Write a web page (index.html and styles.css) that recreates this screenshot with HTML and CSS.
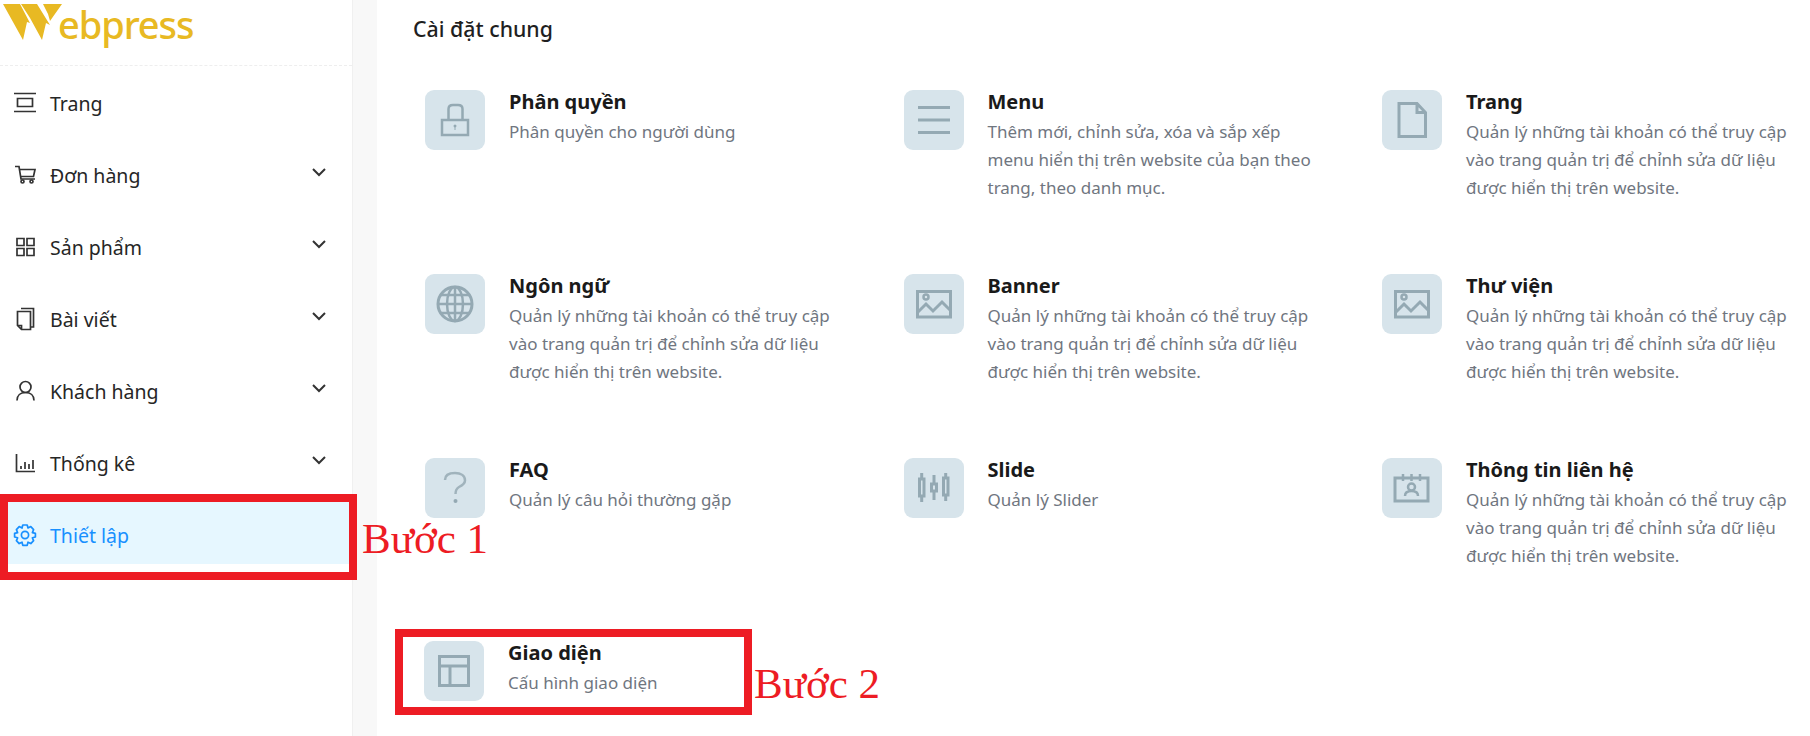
FILE: index.html
```html
<!DOCTYPE html>
<html lang="vi">

<head>
    <meta charset="utf-8">
    <title>Cài đặt chung</title>
    <link rel="stylesheet" href="styles.css">
</head>

<body>
    <aside class="sidebar">
        <div class="logo">
            <svg class="logo-mark" viewBox="0 0 64 44" width="64" height="44">
                <polygon points="3,4 20,4 30,23 27,22 23,40" />
                <polygon points="21,4 37,4 50,25 46,23 42,40 30,18" />
                <polygon points="43,4 62,4 50,21 48,14" />
            </svg>
            <span class="logo-text">ebpress</span>
        </div>

        <ul class="nav">
            <li class="nav-item">
                <svg class="nav-icon" viewBox="0 0 24 24"><path d="M1 2.5H23M1 20.5H23M4.5 7.5H19.5V15.5H4.5Z" /></svg>
                <span>Trang</span>
            </li>
            <li class="nav-item">
                <svg class="nav-icon" viewBox="0 0 24 24"><path d="M2 3.5H6L8 16H22M6.5 6.5H22L20.5 13.5H7.6" /><circle cx="9.5" cy="18.5" r="1.5" /><circle cx="18.5" cy="18.5" r="1.5" /></svg>
                <span>Đơn hàng</span>
                <svg class="chevron" viewBox="0 0 14 10"><path d="M1 2L7 8L13 2" /></svg>
            </li>
            <li class="nav-item">
                <svg class="nav-icon" viewBox="0 0 24 24"><path d="M4 3.5H11V10.5H4ZM14 3.5H21V10.5H14ZM4 13.5H11V20.5H4ZM14 13.5H21V20.5H14Z" /></svg>
                <span>Sản phẩm</span>
                <svg class="chevron" viewBox="0 0 14 10"><path d="M1 2L7 8L13 2" /></svg>
            </li>
            <li class="nav-item">
                <svg class="nav-icon" viewBox="0 0 24 24"><path d="M8 1.5H20.5V20H18M4.5 4.5H17.5V22.5H8.5L4.5 18.5ZM4.5 18.5H8.5V22.5" /></svg>
                <span>Bài viết</span>
                <svg class="chevron" viewBox="0 0 14 10"><path d="M1 2L7 8L13 2" /></svg>
            </li>
            <li class="nav-item">
                <svg class="nav-icon" viewBox="0 0 24 24"><circle cx="12.5" cy="8" r="5.5" /><path d="M4 21.5C4 16.5 7.5 13.5 12.5 13.5S21 16.5 21 21.5" /></svg>
                <span>Khách hàng</span>
                <svg class="chevron" viewBox="0 0 14 10"><path d="M1 2L7 8L13 2" /></svg>
            </li>
            <li class="nav-item">
                <svg class="nav-icon" viewBox="0 0 24 24"><path d="M3.5 3V20.5H22M8 18V15M12 18V11M16 18V13M20 18V9" /></svg>
                <span>Thống kê</span>
                <svg class="chevron" viewBox="0 0 14 10"><path d="M1 2L7 8L13 2" /></svg>
            </li>
            <li class="nav-item active">
                <svg class="nav-icon" viewBox="0 0 24 24"><circle cx="12" cy="12" r="3.6" /><path d="M9.8 2H14.2L15 5L17.8 3.6L20.6 6.6L19.4 9.6L22.4 10.4V14L19.4 14.8L20.6 17.6L17.8 20.6L15 19.2L14.2 22.4H9.8L9 19.2L6.2 20.6L3.4 17.6L4.6 14.8L1.6 14V10.4L4.6 9.6L3.4 6.6L6.2 3.6L9 5Z" stroke-linejoin="round" /></svg>
                <span>Thiết lập</span>
            </li>
        </ul>
    </aside>

    <div class="gutter"></div>

    <main class="content">
        <h1 class="page-title">Cài đặt chung</h1>

        <div class="settings">
            <div class="setting">
                <div class="setting-icon">
                    <svg viewBox="0 0 60 60"><path d="M17 30H43V45H17ZM23.5 30V19C23.5 16 25 15 28 15H33C36 15 37.5 16 37.5 19V30" /><path class="fill" d="M28.5 36a1.5 1.5 0 1 1 3 0a1.5 1.5 0 0 1-1 1.4V40H29.500V37.400a1.5 1.500 0 0 1-1-1.400Z" /></svg>
                </div>
                <div class="setting-body">
                    <h3>Phân quyền</h3>
                    <p>Phân quyền cho người dùng</p>
                </div>
            </div>
            <div class="setting">
                <div class="setting-icon">
                    <svg viewBox="0 0 60 60"><path class="thick" d="M14 17.500H46M14 30H46M14 42.500H46" /></svg>
                </div>
                <div class="setting-body">
                    <h3>Menu</h3>
                    <p>Thêm mới, chỉnh sửa, xóa và sắp xếp menu hiển thị trên website của bạn theo trang, theo danh mục.</p>
                </div>
            </div>
            <div class="setting">
                <div class="setting-icon">
                    <svg viewBox="0 0 60 60"><path class="thick" d="M17 13.500H35L43.500 22.500V46.500H17ZM35 13.500V22.500H43.500" /></svg>
                </div>
                <div class="setting-body">
                    <h3>Trang</h3>
                    <p>Quản lý những tài khoản có thể truy cập vào trang quản trị để chỉnh sửa dữ liệu được hiển thị trên website.</p>
                </div>
            </div>

            <div class="setting">
                <div class="setting-icon">
                    <svg viewBox="0 0 60 60"><circle class="thick" cx="30" cy="30" r="17" /><ellipse cx="30" cy="30" rx="8" ry="17" /><path d="M30 13V47M13.500 30H46.500M16 21H44M16 39H44" /></svg>
                </div>
                <div class="setting-body">
                    <h3>Ngôn ngữ</h3>
                    <p>Quản lý những tài khoản có thể truy cập vào trang quản trị để chỉnh sửa dữ liệu được hiển thị trên website.</p>
                </div>
            </div>
            <div class="setting">
                <div class="setting-icon">
                    <svg viewBox="0 0 60 60"><path class="thick" d="M13.500 17.500H46.500V43H13.500ZM14 38L22 30L29 37L38 28L47 37" /><circle cx="22" cy="23" r="2.500" /></svg>
                </div>
                <div class="setting-body">
                    <h3>Banner</h3>
                    <p>Quản lý những tài khoản có thể truy cập vào trang quản trị để chỉnh sửa dữ liệu được hiển thị trên website.</p>
                </div>
            </div>
            <div class="setting">
                <div class="setting-icon">
                    <svg viewBox="0 0 60 60"><path class="thick" d="M13.500 17.500H46.500V43H13.500ZM14 38L22 30L29 37L38 28L47 37" /><circle cx="22" cy="23" r="2.500" /></svg>
                </div>
                <div class="setting-body">
                    <h3>Thư viện</h3>
                    <p>Quản lý những tài khoản có thể truy cập vào trang quản trị để chỉnh sửa dữ liệu được hiển thị trên website.</p>
                </div>
            </div>

            <div class="setting">
                <div class="setting-icon">
                    <svg viewBox="0 0 60 60"><path class="light" d="M20 22C20 17 24 15 30 15C36 15 40 18 40 22.500C40 26 37 27.500 34 29C31.500 30.500 30.500 32 30.500 36" /><circle class="dot" cx="30.500" cy="43" r="2" /></svg>
                </div>
                <div class="setting-body">
                    <h3>FAQ</h3>
                    <p>Quản lý câu hỏi thường gặp</p>
                </div>
            </div>
            <div class="setting">
                <div class="setting-icon">
                    <svg viewBox="0 0 60 60"><path class="thick" d="M15.500 21H20V38H15.500ZM17.700 15V21M17.700 38V44M27.500 26H32.500V33H27.500ZM30 17V26M30 33V42M39.500 20H44V37H39.500ZM41.700 15V20M41.700 37V43" /></svg>
                </div>
                <div class="setting-body">
                    <h3>Slide</h3>
                    <p>Quản lý Slider</p>
                </div>
            </div>
            <div class="setting">
                <div class="setting-icon">
                    <svg viewBox="0 0 60 60"><path class="thick" d="M13 20H46V43H13Z" /><path d="M21 16V23M29.500 16V23M38 16V23M23 38C23 34 26 33 29.500 33S36 34 36 38" /><circle cx="29.500" cy="29" r="3.500" /></svg>
                </div>
                <div class="setting-body">
                    <h3>Thông tin liên hệ</h3>
                    <p>Quản lý những tài khoản có thể truy cập vào trang quản trị để chỉnh sửa dữ liệu được hiển thị trên website.</p>
                </div>
            </div>

            <div class="setting setting-last">
                <div class="setting-icon">
                    <svg viewBox="0 0 60 60"><path class="thick" d="M15.500 15.500H44.500V44.500H15.500ZM15.500 25H44.500M26 25V44.500" /></svg>
                </div>
                <div class="setting-body">
                    <h3>Giao diện</h3>
                    <p>Cấu hình giao diện</p>
                </div>
            </div>
        </div>
    </main>

    <!-- chu thich mau do ve len tren anh -->
    <div class="mark mark-one"></div>
    <div class="mark-label label-one">Bước 1</div>
    <div class="mark mark-two"></div>
    <div class="mark-label label-two">Bước 2</div>
</body>

</html>
```

FILE: styles.css
```css
* {
    box-sizing: border-box;
}

html,
body {
    height: 736px;
    overflow: hidden;
}

body {
    margin: 0;
    display: flex;
    position: relative;
    background-color: #fff;
    font-family: "Noto Sans", "Open Sans", sans-serif;
    color: #262626;
}

.sidebar {
    width: 353px;
    flex: none;
    border-right: 1px solid #f0f0f0;
}

.logo {
    height: 66px;
    border-bottom: 1px dashed #eeeeee;
    display: flex;
    align-items: flex-start;
}

.logo-mark {
    flex: none;
    fill: #e8b923;
}

.logo-text {
    margin-left: -6px;
    font-size: 38px;
    line-height: 48px;
    font-weight: 500;
    letter-spacing: -1.100px;
    color: #e8b923;
}

.nav {
    list-style: none;
    margin: 4px 0 0;
    padding: 0;
}

.nav-item {
    height: 62px;
    margin: 0 3px 10px 8px;
    padding: 5px 23px 0 5px;
    display: flex;
    align-items: center;
    gap: 13px;
    font-size: 19.500px;
}

.nav-item span {
    flex: 1;
}

.nav-icon {
    width: 24px;
    height: 24px;
    flex: none;
    margin-top: -2px;
    fill: none;
    stroke: #333;
    stroke-width: 1.7;
}

.chevron {
    width: 14px;
    height: 10px;
    flex: none;
    margin-top: -8px;
    fill: none;
    stroke: #333;
    stroke-width: 2;
}

.active {
    background-color: #e6f7ff;
    color: #1890ff;
}

.active .nav-icon {
    stroke: #1890ff;
}

.gutter {
    width: 24px;
    flex: none;
    background-color: #f8f8f8;
}

.content {
    flex: 1;
    padding: 14px 0 0 36px;
}

.page-title {
    margin: 0 0 46px;
    font-size: 21.300px;
    line-height: 30px;
    font-weight: 500;
    color: #1f1f1f;
}

.settings {
    display: grid;
    grid-template-columns: repeat(3, 478.500px);
    grid-template-rows: repeat(3, 184px) 60px;
    margin-left: 12px;
}

.setting {
    display: flex;
    gap: 24px;
}

.setting-last {
    margin: -1px 0 0 -1px;
}

.setting-icon {
    width: 60px;
    height: 60px;
    flex: none;
    border-radius: 9px;
    background-color: #d7e4eb;
}

.setting-icon svg {
    display: block;
    width: 60px;
    height: 60px;
    fill: none;
    stroke: #94a9b3;
    stroke-width: 2.500;
}

.setting-icon .thick {
    stroke-width: 3;
}

.setting-icon .light {
    stroke: #a0b3bc;
}

.setting-icon .fill,
.setting-icon .dot {
    fill: #94a9b3;
    stroke: none;
}

.setting-body {
    width: 335px;
}

.setting-body h3 {
    margin: -2px 0 0;
    font-size: 20px;
    line-height: 28px;
    font-weight: 700;
    color: #1a1a1a;
}

.setting-body p {
    margin: 2px 0 0;
    font-size: 17px;
    line-height: 28px;
    color: #70767f;
}

.mark {
    position: absolute;
    border: 8px solid #ed1c24;
}

.mark-one {
    left: 0;
    top: 494px;
    width: 357px;
    height: 86px;
}

.mark-two {
    left: 395px;
    top: 629px;
    width: 357px;
    height: 86px;
}

.mark-label {
    position: absolute;
    font-family: "Liberation Serif", serif;
    font-size: 43px;
    line-height: 50px;
    color: #ed1c24;
}

.label-one {
    left: 362px;
    top: 514px;
}

.label-two {
    left: 754px;
    top: 659px;
}
```
